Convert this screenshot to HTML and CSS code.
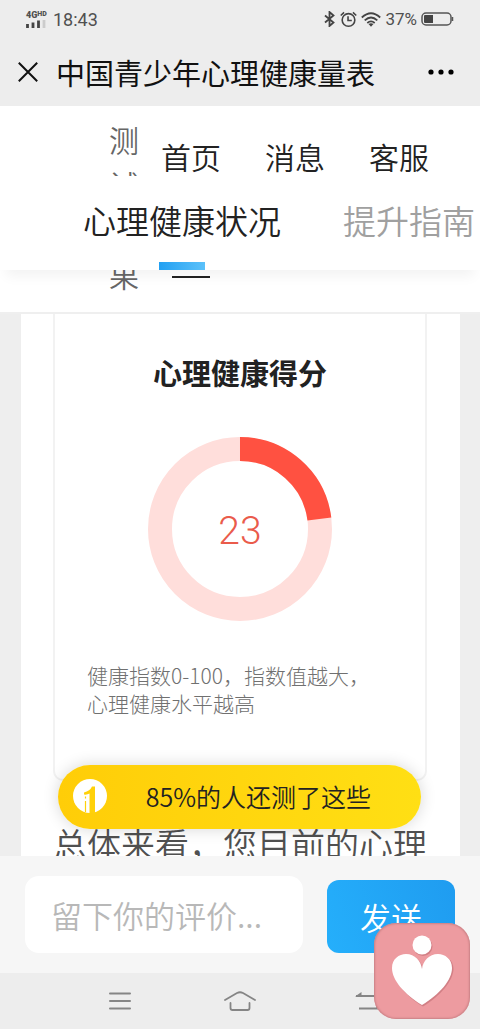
FILE: index.html
```html
<!DOCTYPE html>
<html lang="zh-CN">
<head>
<meta charset="utf-8">
<meta name="viewport" content="width=device-width, initial-scale=1">
<title>中国青少年心理健康量表</title>
<link rel="stylesheet" href="styles.css">
</head>
<body>
<div class="status">
  <div class="signal" aria-hidden="true">
    <span class="network">4G<sup>HD</sup></span>
    <svg width="20" height="8" viewBox="0 0 20 8"><g stroke="#444" stroke-width="2.800"><path d="M1.500 4V8M7 2.500V8M12.500 .5V8"/><path d="M18 0V8" stroke="#ccc"/></g></svg>
  </div>
  <time class="clock">18:43</time>
  <svg class="bluetooth" width="12" height="16" viewBox="0 0 12 16" fill="none" stroke="#444" stroke-width="1.800"><path d="M1 4.500l8.500 7L5.500 15V1l4 3.500L1 11.500"/></svg>
  <svg width="17" height="17" viewBox="0 0 18 17" fill="none" stroke="#444" stroke-width="1.700"><circle cx="9" cy="9" r="6.700"/><path d="M8.500 5v4.500H12.500M.8 4.300L4.300 1M17.200 4.300L13.700 1"/></svg>
  <svg width="20" height="15" viewBox="0 0 20 15" fill="none" stroke="#444" stroke-width="1.800"><path d="M.8 5.500Q10-3 19.200 5.500M3.700 8.300Q10 2.700 16.300 8.300M6.300 11Q10 7.800 13.700 11"/><path d="M7.500 12Q10 10.500 12.500 12L10 14.800z" fill="#444" stroke="none"/></svg>
  <span class="percent">37%</span>
  <svg width="33" height="15" viewBox="0 0 33 15"><rect x="1" y="1" width="29" height="12" rx="4" fill="none" stroke="#555" stroke-width="1.500"/><path d="M4 3h8v8H4q-1 0-1-1V4q0-1 1-1z" fill="#444"/><path d="M31.500 5v4" stroke="#555" stroke-width="1.500"/></svg>
</div>

<header class="titlebar">
  <button class="icon-button" aria-label="关闭"><svg width="20" height="20" viewBox="0 0 20 20" stroke="#111" stroke-width="2"><path d="M.8.8l18.400 18.400M19.200.8L.8 19.200"/></svg></button>
  <h1 class="title">中国青少年心理健康量表</h1>
  <button class="icon-button" aria-label="更多"><svg width="26" height="6" viewBox="0 0 26 6" fill="#000"><circle cx="3" cy="3" r="2.600"/><circle cx="13" cy="3" r="2.600"/><circle cx="23" cy="3" r="2.600"/></svg></button>
</header>

<div class="top">
  <nav class="site-nav">
    <a class="nav-link nav-result" href="#result">测试结果</a>
    <a class="nav-link nav-current" href="#home">首页</a>
    <a class="nav-link" href="#message">消息</a>
    <a class="nav-link" href="#service">客服</a>
  </nav>
  <div class="tabs">
    <a class="tab tab-active" href="#state">心理健康状况</a>
    <a class="tab" href="#guide">提升指南</a>
  </div>
</div>

<main class="content">
  <div class="panel">
    <section class="card">
      <h2 class="card-title">心理健康得分</h2>
      <div class="gauge">
        <svg class="ring" viewBox="0 0 184 184" fill="none" stroke-width="24"><circle cx="92" cy="92" r="80" stroke="#ffdedb"/><circle cx="92" cy="92" r="80" stroke="#ff5141" pathLength="100" stroke-dasharray="23 77" transform="rotate(-90 92 92)"/></svg>
        <strong class="score">23</strong>
      </div>
      <p class="note">健康指数0-100，指数值越大，<br>心理健康水平越高</p>
    </section>
    <p class="summary">总体来看，您目前的心理</p>
  </div>
  <a class="promo" href="#more">
    <svg class="promo-icon" width="34" height="34" viewBox="0 0 34 34"><circle cx="17" cy="17" r="17" fill="#fff"/><path d="M11 13.500Q17 12 19 7.500h3V34h-5.500V14.500Q14 16 11 15.500z" fill="#ffd10a"/><path d="M12.500 17.500v2M12.500 22v11" stroke="#ffd10a" stroke-width="1.200"/></svg>
    <span class="promo-text">85%的人还测了这些</span>
  </a>
</main>

<form class="comment">
  <input class="comment-input" type="text" aria-label="评价" placeholder="留下你的评价...">
  <button class="send" type="button">发送</button>
</form>

<nav class="system">
  <button class="system-button" aria-label="菜单"><svg width="22" height="18" viewBox="0 0 22 18" stroke="#858585" stroke-width="2" stroke-linecap="round"><path d="M1 1.500h20M1 9h20M1 16.500h20"/></svg></button>
  <button class="system-button" aria-label="主屏幕"><svg width="32" height="20" viewBox="0 0 32 20" fill="none" stroke="#858585" stroke-width="1.800" stroke-linecap="round"><path d="M1 9L13 2Q16 .5 19 2L31 9M6.500 12v5q0 2 2 2h15q2 0 2-2v-5"/></svg></button>
  <button class="system-button" aria-label="返回"><svg width="36" height="20" viewBox="0 0 36 20" fill="none" stroke="#858585" stroke-width="2"><path d="M14 5H35V17.500H17"/><path d="M13 5.500L19.500 1v4.500z" fill="#858585" stroke="none"/></svg></button>
</nav>

<button class="assistant" aria-label="心理助手">
  <svg class="assistant-icon" viewBox="0 0 96 96"><g fill="#b9656b" opacity=".5"><circle cx="49" cy="23.500" r="9.500"/><path d="M49 83.500C31 72.500 19.500 58 19 46C19 37 26 32 33 32C42 32 48 39 49 47C50 39 56 32 65 32C72 32 79.500 37 79.500 46C79 58 67 72.500 49 83.500z"/></g><g fill="#fff"><circle cx="48" cy="22" r="9.500"/><path d="M48 82C30 71 18 57 18 45C18 36 25 31 32 31C41 31 47 38 48 46C49 38 55 31 64 31C71 31 78 36 78 45C78 57 66 71 48 82z"/></g></svg>
</button>
</body>
</html>
```
FILE: styles.css
```css
* {
  box-sizing: border-box;
}

body {
  position: relative;
  display: flex;
  flex-direction: column;
  height: 100vh;
  margin: 0;
  overflow: hidden;
  background: #ededed;
  color: #222;
  font-family: "Noto Sans CJK SC", sans-serif;
  font-weight: 350;
}

button {
  padding: 0;
  border: 0;
  background: none;
  font: inherit;
}

a {
  color: inherit;
  text-decoration: none;
}

svg {
  display: block;
}

.status {
  display: flex;
  flex: none;
  align-items: center;
  gap: 4px;
  height: 38px;
  padding: 0 26px;
  color: #505050;
  font-family: Roboto, sans-serif;
  font-weight: 400;
}

.signal {
  display: flex;
  flex-direction: column;
  width: 23px;
}

.network {
  font-size: 9px;
  font-weight: 900;
  line-height: 9px;
  white-space: nowrap;
}

.network sup {
  font-size: 7px;
  line-height: 1;
  vertical-align: 2px;
}

.clock {
  font-size: 18px;
}

.bluetooth {
  margin-left: auto;
}

.percent {
  font-size: 17px;
}

.titlebar {
  display: flex;
  flex: none;
  align-items: center;
  height: 68px;
  padding: 0 26px 0 18px;
}

.icon-button {
  flex: none;
}

.title {
  flex: 1;
  margin: 0;
  padding-left: 18px;
  color: #111;
  font-size: 29px;
  font-weight: 400;
  line-height: 44px;
  white-space: nowrap;
}

.top {
  position: relative;
  flex: none;
  height: 208px;
  border-bottom: 2px solid #efefef;
  background: #fff;
}

.site-nav {
  display: flex;
  justify-content: center;
  gap: 44px;
  padding-left: 58px;
  font-size: 30px;
  line-height: 45px;
}

.nav-link {
  flex: none;
  padding-top: 28px;
}

.nav-result {
  width: 30px;
  margin-right: -22px;
  padding-top: 11px;
  color: #666;
}

.nav-current {
  display: flex;
  flex-direction: column;
  justify-content: space-between;
  align-items: center;
  height: 172px;
}

.nav-current::after {
  content: "";
  width: 38px;
  height: 2px;
  background: #222;
}

.tabs {
  position: absolute;
  top: 70px;
  right: 0;
  left: 0;
  display: flex;
  justify-content: flex-end;
  gap: 62px;
  height: 94px;
  padding-right: 5px;
  background: #fff;
  box-shadow: 0 12px 12px -6px rgba(0, 0, 0, 0.05);
  font-size: 33px;
  line-height: 88px;
}

.tab {
  display: flex;
  flex-direction: column;
  align-items: center;
  color: #a0a0a0;
}

.tab-active {
  color: #222;
}

.tab-active::after {
  content: "";
  flex: none;
  width: 46px;
  height: 8px;
  margin-top: -2px;
  background: linear-gradient(90deg, #22a0f2, #5bc1fa);
}

.content {
  position: relative;
  flex: 1;
  min-height: 0;
  padding: 0 20px 0 21px;
  overflow: hidden;
  background: #eee;
}

.panel {
  height: 100%;
  padding: 0 33px 0 32px;
  background: #fff;
}

.card {
  padding: 36px 32px 62px;
  border: 2px solid #f2f2f2;
  border-top: 0;
  border-radius: 0 0 10px 10px;
}

.card-title {
  margin: 0;
  font-size: 29px;
  font-weight: 700;
  line-height: 44px;
  text-align: center;
}

.gauge {
  display: grid;
  place-items: center;
  margin: 43px 0 40px;
}

.ring,
.score {
  grid-area: 1 / 1;
}

.ring {
  width: 184px;
}

.score {
  padding-top: 4px;
  color: #ea5b4b;
  font-family: Roboto, sans-serif;
  font-size: 39px;
  font-weight: 300;
}

.note {
  margin: 0;
  color: #707070;
  font-size: 21px;
  font-weight: 300;
  line-height: 28px;
  white-space: nowrap;
}

.summary {
  margin: 38px 0 0;
  color: #505050;
  font-size: 34px;
  line-height: 50px;
  white-space: nowrap;
}

.promo {
  position: absolute;
  right: 59px;
  bottom: 27px;
  left: 58px;
  display: flex;
  align-items: center;
  height: 64px;
  padding: 0 50px 2px 15px;
  border-radius: 32px;
  background: linear-gradient(90deg, #ffcd08, #ffdf14);
  box-shadow: 0 0 16px rgba(0, 0, 0, 0.16);
}

.promo-icon {
  flex: none;
}

.promo-text {
  flex: 1;
  font-size: 25px;
  line-height: 36px;
  text-align: right;
  white-space: nowrap;
}

.comment {
  display: flex;
  flex: none;
  align-items: flex-end;
  gap: 24px;
  height: 117px;
  padding: 20px 25px;
  background: #f6f6f6;
}

.comment-input {
  flex: 1;
  min-width: 0;
  height: 77px;
  padding: 0 26px;
  border: 0;
  border-radius: 14px;
  background: #fff;
  color: #222;
  font: inherit;
  font-size: 31px;
}

.comment-input::placeholder {
  color: #b8b8b8;
  opacity: 1;
}

.send {
  width: 128px;
  height: 73px;
  border-radius: 12px;
  background: linear-gradient(70deg, #25affb, #1f9cf0);
  color: #fff;
  font-size: 31px;
}

.system {
  display: flex;
  flex: none;
  justify-content: center;
  height: 56px;
  padding: 0 60px;
}

.system-button {
  display: grid;
  flex: 1;
  place-items: center;
}

.assistant {
  position: absolute;
  right: 10px;
  bottom: 10px;
  width: 96px;
  height: 96px;
  border-radius: 22px;
  background: #ed9ba0;
  box-shadow: inset 0 0 2px 1px #c98085;
}

.assistant-icon {
  width: 100%;
}
```
